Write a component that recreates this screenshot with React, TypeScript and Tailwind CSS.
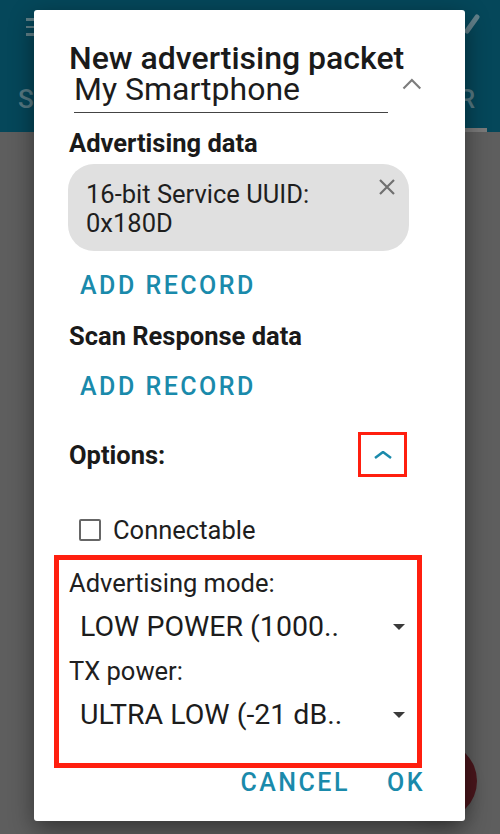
import React from "react";

const teal = "text-[#1a8aab]";

const ChevronUp = ({ className }: { className: string }) => (
  <svg width="20" height="12" viewBox="0 0 20 12" className={className}>
    <path d="M1.5 10.5 L10 2 L18.5 10.5" fill="none" stroke="currentColor" strokeWidth="2.2" />
  </svg>
);

const DropArrow = () => (
  <svg width="12" height="6" viewBox="0 0 12 6" className="text-[#3a3a3a]">
    <path d="M0 0 H12 L6 6 Z" fill="currentColor" />
  </svg>
);

const Spinner = ({ label, value }: { label: string; value: string }) => (
  <>
    <div className="text-[25.5px] leading-[30px] text-[#202020]">{label}</div>
    <div className="mt-[12px] flex h-[34px] items-center justify-between pl-[11px] pr-[12px]">
      <span className="text-[28.5px] leading-[34px] text-[#1c1c1c]">{value}</span>
      <DropArrow />
    </div>
  </>
);

export default function App() {
  return (
    <div className="relative h-[834px] w-[500px] overflow-hidden bg-[#5e5e5e] font-['Roboto',sans-serif]">
      {/* app behind the dim */}
      <div className="flex h-[132px] flex-col bg-[#05475a]">
        <div className="flex h-[70px] items-start justify-between pl-[26px] pr-[20px] pt-[18px]">
          <div className="flex w-[18px] flex-col gap-[5px]">
            <div className="h-[2.5px] bg-[#5f7f87]" />
            <div className="h-[2.5px] bg-[#5f7f87]" />
            <div className="h-[2.5px] bg-[#5f7f87]" />
          </div>
          <svg width="16" height="20" viewBox="0 0 16 20" className="-mt-[4px] text-[#62808a]">
            <path d="M3 17 L13 3" stroke="currentColor" strokeWidth="5" strokeLinecap="round" />
          </svg>
        </div>
        <div className="flex h-[58px] items-center justify-between pl-[18px] pr-[25px] text-[26px] font-medium text-[#557882]">
          <span>SCANNER</span>
          <span>ADVERTISER</span>
        </div>
        <div className="flex justify-end pr-[13px]">
          <div className="h-[4px] w-[230px] bg-[#7a7a7a]" />
        </div>
      </div>

      <div className="absolute left-[399px] top-[742px] h-[78px] w-[78px] rounded-full bg-[#4a161c] shadow-lg" />

      {/* dialog */}
      <div className="absolute left-[34px] top-[10px] flex h-[811px] w-[431px] flex-col rounded-[3px] bg-white pl-[35px] pr-[43px] pt-[32px] shadow-[0_8px_24px_rgba(0,0,0,0.45)]">
        <div className="text-[32px] font-medium leading-[33px] text-[#1a1a1a]">New advertising packet</div>
        <div className="flex items-start">
          <div className="ml-[5px] w-[318px] border-b border-[#444] pb-[8px]">
            <div className="text-[32px] leading-[29px] text-[#1c1c1c]">My Smartphone</div>
          </div>
          <ChevronUp className="ml-[14px] mt-[3px] text-[#7d7d7d]" />
        </div>

        <div className="mt-[15px] text-[25.5px] font-bold leading-[30px] text-[#1a1a1a]">Advertising data</div>
        <div className="-ml-px mt-[6px] flex h-[87px] w-[341px] items-start justify-between rounded-[26px] bg-[#e0e0e0] pl-[18px] pr-[13px] pt-[16px]">
          <div className="text-[25.5px] leading-[29px] text-[#1e1e1e]">
            16-bit Service UUID:
            <br />
            0x180D
          </div>
          <svg width="18" height="18" viewBox="0 0 18 18" className="mt-[-2px] text-[#707070]">
            <path d="M2 2 L16 16 M16 2 L2 16" stroke="currentColor" strokeWidth="2.2" />
          </svg>
        </div>
        <div className={`ml-[11px] mt-[20px] text-[25px] font-medium leading-[30px] tracking-[0.1em] ${teal}`}>ADD RECORD</div>

        <div className="mt-[20px] text-[25.5px] font-bold leading-[30px] text-[#1a1a1a]">Scan Response data</div>
        <div className={`ml-[11px] mt-[21px] text-[25px] font-medium leading-[30px] tracking-[0.1em] ${teal}`}>ADD RECORD</div>

        <div className="mt-[30px] flex h-[45px] items-center justify-between">
          <span className="text-[25.5px] font-bold leading-[30px] text-[#1a1a1a]">Options:</span>
          <div className="mr-[15px] flex h-[45px] w-[49px] items-center justify-center border-[3px] border-[#ff1f0f]">
            <svg width="18" height="8" viewBox="0 0 18 8" className={teal}>
              <path d="M1 7 L9 1 L17 7" fill="none" stroke="currentColor" strokeWidth="2.5" />
            </svg>
          </div>
        </div>

        <div className="mt-[38px] flex h-[30px] items-center">
          <div className="ml-[10px] h-[22px] w-[22px] rounded-[2px] border-2 border-[#666]" />
          <span className="ml-[12px] text-[25.5px] leading-[30px] text-[#1e1e1e]">Connectable</span>
        </div>

        <div className="-ml-[15px] mt-[10px] h-[213px] border-[5px] border-[#ff1f0f] pl-[10px] pt-[8px]">
          <Spinner label="Advertising mode:" value="LOW POWER (1000.." />
          <div className="mt-[12px]" />
          <Spinner label="TX power:" value="ULTRA LOW (-21 dB.." />
        </div>

        <div className={`flex justify-end gap-[37px] text-[25px] font-medium leading-[30px] tracking-[0.1em] ${teal}`}>
          <span>CANCEL</span>
          <span className="-mr-[3px]">OK</span>
        </div>
      </div>
    </div>
  );
}
